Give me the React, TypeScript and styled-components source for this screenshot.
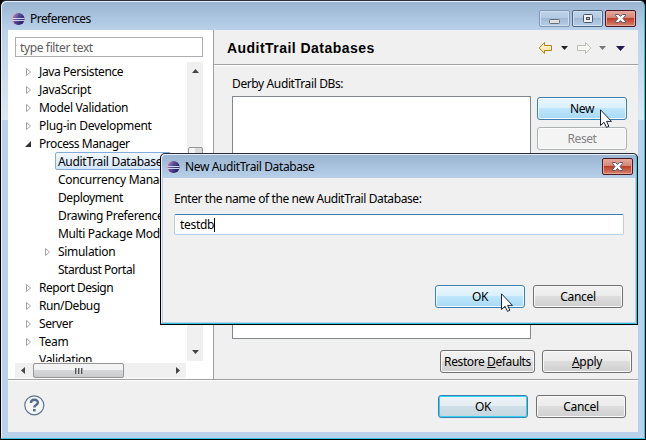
import React from "react";
import styled, { createGlobalStyle, css } from "styled-components";

const Global = createGlobalStyle`
  * { box-sizing: border-box; }
  html, body { margin: 0; width: 646px; height: 440px; overflow: hidden; background: #000; }
  body { font: 12px/18px "Noto Sans", "Open Sans", sans-serif; color: #000; }
  svg { display: block; flex: none; }
`;

const frame = css`
  display: flex;
  flex-direction: column;
  border: 1px solid #000;
  border-top-color: #2c2c38;
  box-shadow: inset -1px -1px 0 #30c6e0, inset 1px 1px 0 #e6f0fa;
`;
const Window = styled.main`
  ${frame}
  position: relative;
  width: 646px;
  height: 440px;
  padding: 1px 7px 7px;
  background: linear-gradient(#99b4d1 0, #b9d1ea 29px, #dce8f5 119px, #b9d1ea 119px);
  border-radius: 6px 6px 0 0;
`;
const Dialog = styled.section`
  ${frame}
  position: absolute;
  left: 159px;
  top: 152px;
  width: 478px;
  height: 172px;
  padding: 1px 2px 2px;
  background: linear-gradient(#99b4d1 0, #b9d1ea 25px);
  border-radius: 5px 5px 0 0;
`;
const TitleBar = styled.header<{ $small?: boolean }>`
  display: flex;
  flex: none;
  height: ${(p) => (p.$small ? 23 : 28)}px;
  padding: ${(p) => (p.$small ? "2px 2px 0 3px" : "0 2px 0 3px")};
`;
const Title = styled.div<{ $small?: boolean }>`
  display: flex;
  flex: 1;
  align-items: center;
  gap: 5px;
  padding-top: ${(p) => (p.$small ? 0 : 5)}px;
  height: ${(p) => (p.$small ? 19 : 28)}px;
`;
const Text = styled.span<{ $ls?: number }>`
  letter-spacing: ${(p) => p.$ls ?? -0.3}px;
  white-space: nowrap;
`;
const Controls = styled.div<{ $small?: boolean }>`
  display: flex;
  gap: 2px;
  padding-top: ${(p) => (p.$small ? 1 : 8)}px;
`;
const Control = styled.span<{ $close?: boolean; $dim?: boolean }>`
  display: grid;
  place-items: center;
  width: 31px;
  height: 17px;
  border: 1px solid ${(p) => (p.$close ? "#4d1721" : p.$dim ? "#8097b4" : "#4f6680")};
  border-radius: 2px;
  box-shadow: inset 0 0 0 1px ${(p) => (p.$close ? "#e5a79b" : "#d0e0f1")};
  background: ${(p) =>
    p.$close
      ? "linear-gradient(#e6aa9d 0, #d48475 47%, #bc3b25 48%, #d58470 100%)"
      : "linear-gradient(#bed2e9 0, #b4cbe3 47%, #9fb9d5 48%, #b7d0e9 100%)"};
`;
const Client = styled.div`
  display: flex;
  flex: 1;
  min-height: 0;
  flex-direction: column;
  background: #f0f0f0;
`;
const Panes = styled.div`
  display: flex;
  height: 349px;
`;
const Sidebar = styled.aside`
  width: 206px;
  height: 349px;
  padding: 7px 10px 0 7px;
  border-right: 1px solid #a0a0a0;
  background: #fff;
`;
const Filter = styled.div`
  height: 20px;
  padding: 1px 4px;
  border: 1px solid #abadb3;
  color: #5d5d5d;
  line-height: 17px;
`;
const TreeArea = styled.div`
  display: flex;
  height: 306px;
  padding-top: 5px;
`;
const Tree = styled.div`
  width: 172px;
  height: 300px;
  overflow: hidden;
`;
const Item = styled.div<{ $level: number }>`
  display: flex;
  align-items: center;
  height: 18px;
  padding-left: ${(p) => 10 + p.$level * 19}px;
`;
const Toggle = styled.span`
  flex: none;
  width: 11px;
  padding-top: 2px;
`;
const ItemLabel = styled.span<{ $selected?: boolean }>`
  height: 18px;
  padding: 0 3px 0 2px;
  border: 1px solid transparent;
  border-radius: 2px;
  line-height: 17px;
  white-space: nowrap;
  ${(p) => p.$selected && css`
    border-color: #84acdd;
    background: linear-gradient(#f2f8ff, #d3e6fc);
    width: 116px;
  `}
`;
const VScroll = styled.div`
  display: flex;
  flex-direction: column;
  align-items: center;
  width: 16px;
  height: 299px;
  padding: 7px 0;
  background: #f0f0f0;
`;
const VThumb = styled.span`
  width: 15px;
  height: 60px;
  margin: 74px 0 auto;
  border: 1px solid #979797;
  border-radius: 2px;
  background: linear-gradient(90deg, #f4f4f4 0 50%, #d9dadc 50%);
`;
const HScroll = styled.div`
  display: flex;
  align-items: center;
  justify-content: space-between;
  width: 171px;
  height: 15px;
  padding: 0 6px;
  background: #f0f0f0;
`;
const HThumb = styled.span`
  display: flex;
  justify-content: center;
  align-items: center;
  gap: 1px;
  width: 91px;
  height: 15px;
  margin-left: 8px;
  margin-right: auto;
  border: 1px solid #969696;
  border-radius: 2px;
  background: linear-gradient(#f3f3f3 0 46%, #d7d8da 48%, #cacbcd);
`;
const Grip = styled.i`
  width: 2px;
  height: 6px;
  background: linear-gradient(90deg, #555 50%, #aaa 50%);
`;
const Page = styled.section`
  flex: 1;
`;
const PageHeader = styled.div`
  display: flex;
  align-items: center;
  height: 35px;
  padding: 1px 12px 0 13px;
  border-bottom: 1px solid #a0a0a0;
  box-shadow: 0 1px #fff;
`;
const Heading = styled.h1`
  flex: 1;
  margin: 0;
  padding-top: 1px;
  font: bold 14px/18px "Liberation Sans", sans-serif;
  letter-spacing: .46px;
`;
const PageBody = styled.div`
  display: grid;
  grid-template-columns: 299px 90px;
  grid-template-rows: 31px 243px 11px 23px;
  column-gap: 6px;
  height: 314px;
  padding-left: 18px;
`;
const FieldLabel = styled.div`
  padding-top: 10px;
  grid-column: 1 / 3;
`;
const ListBox = styled.div`
  border: 1px solid #828790;
  background: #fff;
`;
const Stack = styled.div`
  display: grid;
  align-content: start;
  gap: 7px;
  padding-top: 1px;
`;
const ButtonRow = styled.div`
  display: flex;
  gap: 7px;
  grid-row: 4;
  grid-column: 1 / 3;
  padding-left: 208px;
`;
type Tone = "normal" | "hot" | "default" | "disabled";
const Button = styled.button<{ $tone?: Tone; $w?: number }>`
  display: grid;
  flex: none;
  place-items: center;
  width: ${(p) => p.$w ?? 90}px;
  height: 23px;
  padding: 0;
  border: 1px solid ${(p) => ({ normal: "#707070", hot: "#3c7fb1", default: "#3c7fb1", disabled: "#adb2b5" })[p.$tone ?? "normal"]};
  border-radius: 3px;
  box-shadow: inset 0 0 0 1px ${(p) => ({ normal: "#fafafa", hot: "#f4fbff", default: "#35d3f5", disabled: "#fafafa" })[p.$tone ?? "normal"]};
  background: ${(p) => ({
    normal: "linear-gradient(#f2f2f2 0, #ebebeb 49%, #dddddd 50%, #cfcfcf 100%)",
    hot: "linear-gradient(#eaf6fd 0, #d9f0fc 49%, #bee6fd 50%, #a7d9f5 100%)",
    default: "linear-gradient(#edf4f8 0, #e4edf2 49%, #d0dfe7 50%, #c5d6de 100%)",
    disabled: "#f4f4f4",
  })[p.$tone ?? "normal"]};
  color: ${(p) => (p.$tone === "disabled" ? "#838383" : "#000")};
  font: inherit;
  line-height: 18px;
  white-space: nowrap;
`;
const Footer = styled.footer`
  display: flex;
  flex: 1;
  align-items: flex-start;
  gap: 8px;
  padding: 15px 12px 0 16px;
  border-top: 1px solid #a0a0a0;
  box-shadow: inset 0 1px #fff;
`;
const HelpSlot = styled.span`
  flex: 1;
`;
const DialogBody = styled.div`
  display: flex;
  flex: 1;
  flex-direction: column;
  padding: 12px 12px 0 11px;
  background: #f0f0f0;
`;
const Input = styled.div`
  display: flex;
  align-items: center;
  width: 450px;
  height: 21px;
  margin-top: 6px;
  padding: 0 0 0 5px;
  border: 1px solid #b5cfe7;
  border-top-color: #3d7bad;
  border-radius: 2px;
  background: #fff;
`;
const Caret = styled.i`
  width: 1px;
  height: 14px;
  background: #000;
`;
const DialogActions = styled.div`
  display: flex;
  justify-content: flex-end;
  gap: 8px;
  margin-top: 50px;
`;
const Pointer = styled.svg<{ $x: number; $y: number }>`
  position: absolute;
  left: ${(p) => p.$x}px;
  top: ${(p) => p.$y}px;
`;

const EclipseIcon = () => (
  <svg width="14" height="14" viewBox="0 0 14 14">
    <defs>
      <linearGradient id="globe" x1="0" y1="0" x2="1" y2=".6">
        <stop offset="0" stopColor="#b79cc8" />
        <stop offset=".45" stopColor="#5a4e98" />
        <stop offset="1" stopColor="#251c62" />
      </linearGradient>
    </defs>
    <circle cx="6.2" cy="7" r="5.7" fill="#eaa6b4" />
    <circle cx="7.6" cy="7" r="6" fill="url(#globe)" />
    <path d="M1.5 6.5H13.5M1.5 8.5H13.5" stroke="#dfe6fa" strokeWidth=".9" />
  </svg>
);
const CloseGlyph = () => (
  <svg width="13" height="11" viewBox="0 0 13 11">
    <path d="M1.5 1.5h3l2 2 2-2h3v1L9 5.5l2.5 3v1h-3l-2-2-2 2h-3v-1l2.5-3-2.5-3z" fill="#fff" stroke="#5b5968" strokeWidth="1" />
  </svg>
);
const MinGlyph = () => (
  <svg width="13" height="13"><rect x="1.5" y="7.5" width="10" height="4" rx="1" fill="#e0e0e0" stroke="#666c78" /></svg>
);
const MaxGlyph = () => (
  <svg width="12" height="11">
    <rect x="1.5" y="1.5" width="9" height="8" rx="1" fill="#f2f2f2" stroke="#4b5368" />
    <rect x="4.5" y="4.5" width="3" height="2" fill="#a7bdd9" stroke="#4b5368" />
  </svg>
);
const NavIcons = () => (
  <svg width="88" height="14" viewBox="0 0 88 14">
    <defs>
      <linearGradient id="gold" x2="0" y2="1"><stop stopColor="#fffdf0" /><stop offset="1" stopColor="#ffdf83" /></linearGradient>
    </defs>
    <path d="M1.2 7 6.5 1.5V4.5h7v5h-7v3z" fill="url(#gold)" stroke="#b98014" />
    <path d="M23 5h7L26.5 9z" fill="#222" />
    <path d="M52.8 7 47.5 1.5V4.5h-8v5h8v3z" fill="#f6f6f3" stroke="#bcbcb6" />
    <path d="M61 5h7L64.5 9z" fill="#777" />
    <path d="M78 5h9l-4.500 5z" fill="#211858" />
  </svg>
);
const Arrow = ({ d, w = 7, h = 7, fill = "#444" }: { d: string; w?: number; h?: number; fill?: string }) => (
  <svg width={w} height={h}><path d={d} fill={fill} /></svg>
);
const HelpIcon = () => (
  <svg width="22" height="22" viewBox="0 0 22 22">
    <circle cx="10.3" cy="10.3" r="9.5" fill="#f5f6f8" stroke="#5e7492" strokeWidth="1.2" />
    <path d="M6.900 8c0-4.200 7-4.200 7-.6 0 2.700-3.600 2.500-3.600 5" fill="none" stroke="#536b8c" strokeWidth="2.400" />
    <path d="M9 14h2.600v2.400H9z" fill="#536b8c" />
  </svg>
);
const Cursor = ({ x, y }: { x: number; y: number }) => (
  <Pointer $x={x} $y={y} width="13" height="20" viewBox="0 0 13 20">
    <path d="M.5.8v15.700l3.500-3.300 2.500 5.200 2.400-1.100-2.300-4.900h4.900z" fill="#fff" stroke="#1b2338" />
  </Pointer>
);

type Node = { label: string; level: number; toggle?: "open" | "closed"; selected?: boolean; ls?: number };
const nodes: Node[] = [
  { label: "Java Persistence", level: 0, toggle: "closed", ls: -0.4 },
  { label: "JavaScript", level: 0, toggle: "closed" },
  { label: "Model Validation", level: 0, toggle: "closed", ls: -0.34 },
  { label: "Plug-in Development", level: 0, toggle: "closed" },
  { label: "Process Manager", level: 0, toggle: "open", ls: -0.45 },
  { label: "AuditTrail Databases", level: 1, selected: true },
  { label: "Concurrency Manager", level: 1 },
  { label: "Deployment", level: 1, ls: -0.4 },
  { label: "Drawing Preferences", level: 1, ls: -0.35 },
  { label: "Multi Package Modeling", level: 1, ls: -0.35 },
  { label: "Simulation", level: 1, toggle: "closed" },
  { label: "Stardust Portal", level: 1, ls: -0.48 },
  { label: "Report Design", level: 0, toggle: "closed", ls: -0.48 },
  { label: "Run/Debug", level: 0, toggle: "closed", ls: -0.4 },
  { label: "Server", level: 0, toggle: "closed", ls: -0.4 },
  { label: "Team", level: 0, toggle: "closed" },
  { label: "Validation", level: 0, ls: -0.3 },
];

const TreeToggle = ({ state }: { state?: "open" | "closed" }) => (
  <Toggle>
    {state === "closed" && (
      <svg width="7" height="10"><path d="M1.5 1.5v7L5.5 5z" fill="#fff" stroke="#a3a3a3" /></svg>
    )}
    {state === "open" && (
      <svg width="7" height="8"><path d="M6 1v6H0z" fill="#333" /></svg>
    )}
  </Toggle>
);

export default function App() {
  return (
    <>
      <Global />
      <Window>
        <TitleBar>
          <Title><EclipseIcon /><Text $ls={-0.55}>Preferences</Text></Title>
          <Controls>
            <Control $dim><MinGlyph /></Control>
            <Control><MaxGlyph /></Control>
            <Control $close><CloseGlyph /></Control>
          </Controls>
        </TitleBar>
        <Client>
          <Panes>
            <Sidebar>
              <Filter><Text $ls={-0.37}>type filter text</Text></Filter>
              <TreeArea>
                <Tree>
                  {nodes.map((n) => (
                    <Item key={n.label} $level={n.level}>
                      <TreeToggle state={n.toggle} />
                      <ItemLabel $selected={n.selected}><Text $ls={n.ls}>{n.label}</Text></ItemLabel>
                    </Item>
                  ))}
                </Tree>
                <VScroll>
                  <Arrow d="M0 4h7L3.5 0z" h={4} />
                  <VThumb />
                  <Arrow d="M0 0h7L3.5 4z" h={4} />
                </VScroll>
              </TreeArea>
              <HScroll>
                <Arrow d="M4 0v7L0 3.5z" w={4} />
                <HThumb><Grip /><Grip /><Grip /></HThumb>
                <Arrow d="M0 0v7l4-3.5z" w={4} />
              </HScroll>
            </Sidebar>
            <Page>
              <PageHeader><Heading>AuditTrail Databases</Heading><NavIcons /></PageHeader>
              <PageBody>
                <FieldLabel><Text $ls={-0.38}>Derby AuditTrail DBs:</Text></FieldLabel>
                <ListBox />
                <Stack>
                  <Button $tone="hot"><Text>New</Text></Button>
                  <Button $tone="disabled" disabled><Text $ls={-0.4}>Reset</Text></Button>
                </Stack>
                <ButtonRow>
                  <Button $w={95}><Text $ls={-0.4}>Restore <u>D</u>efaults</Text></Button>
                  <Button><Text><u>A</u>pply</Text></Button>
                </ButtonRow>
              </PageBody>
            </Page>
          </Panes>
          <Footer>
            <HelpSlot><HelpIcon /></HelpSlot>
            <Button $tone="default"><Text>OK</Text></Button>
            <Button><Text>Cancel</Text></Button>
          </Footer>
        </Client>
        <Cursor x={599} y={108} />
        <Dialog>
          <TitleBar $small>
            <Title $small><EclipseIcon /><Text $ls={-0.38}>New AuditTrail Database</Text></Title>
            <Controls $small><Control $close><CloseGlyph /></Control></Controls>
          </TitleBar>
          <DialogBody>
            <Text $ls={-0.4}>Enter the name of the new AuditTrail Database:</Text>
            <Input><Text>testdb</Text><Caret /></Input>
            <DialogActions>
              <Button $tone="hot"><Text>OK</Text></Button>
              <Button><Text>Cancel</Text></Button>
            </DialogActions>
          </DialogBody>
        </Dialog>
        <Cursor x={500} y={292} />
      </Window>
    </>
  );
}
